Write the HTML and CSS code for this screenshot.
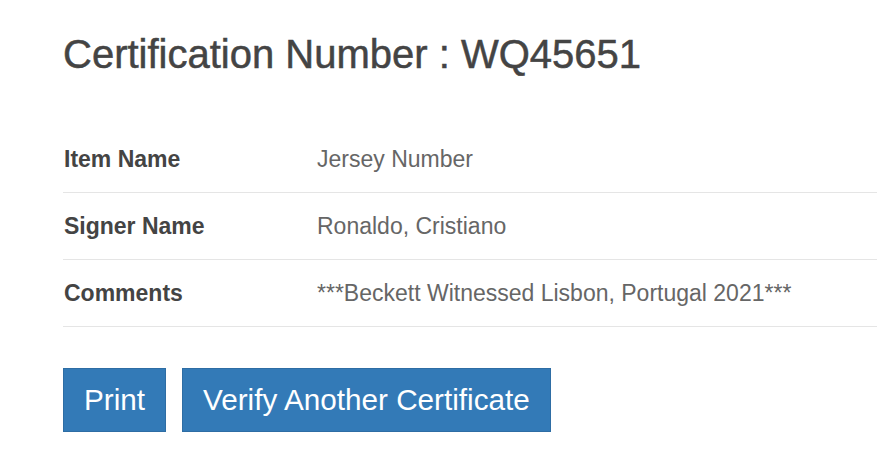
FILE: index.html
```html
<!DOCTYPE html>
<html>
<head>
<meta charset="utf-8">
<link rel="stylesheet" href="styles.css">
</head>
<body>
<div class="page">
  <h1 class="title">Certification Number : WQ45651</h1>
  <table class="details">
    <tr><th>Item Name</th><td>Jersey Number</td></tr>
    <tr><th>Signer Name</th><td>Ronaldo, Cristiano</td></tr>
    <tr><th>Comments</th><td>***Beckett Witnessed Lisbon, Portugal 2021***</td></tr>
  </table>
  <div class="actions">
    <button class="btn">Print</button>
    <button class="btn">Verify Another Certificate</button>
  </div>
</div>
</body>
</html>
```
FILE: styles.css
```css
html, body {
  margin: 0;
  padding: 0;
  background: #fff;
}
body {
  font-family: "Liberation Sans", Arial, sans-serif;
}
.page {
  padding: 30px 0 0 63px;
}
.title {
  margin: 0;
  font-size: 40px;
  font-weight: normal;
  color: #444;
  line-height: 48px;
  -webkit-text-stroke: 0.5px #444;
}
.details {
  margin-top: 48px;
  width: 100%;
  border-collapse: collapse;
}
.details th, .details td {
  text-align: left;
  font-size: 23px;
  height: 66px;
  padding: 0;
  vertical-align: middle;
  border-bottom: 1px solid #e5e5e5;
}
.details th {
  width: 253px;
  padding-left: 1px;
  font-weight: bold;
  color: #444;
}
.details td {
  color: #666;
}
.actions {
  display: flex;
  gap: 16px;
  margin-top: 41px;
}
.btn {
  font-family: "Liberation Sans", Arial, sans-serif;
  font-size: 29.7px;
  color: #fff;
  background: #337ab7;
  border: 1px solid #2e6da4;
  height: 64px;
  padding: 0 20px;
  border-radius: 0;
}
```
